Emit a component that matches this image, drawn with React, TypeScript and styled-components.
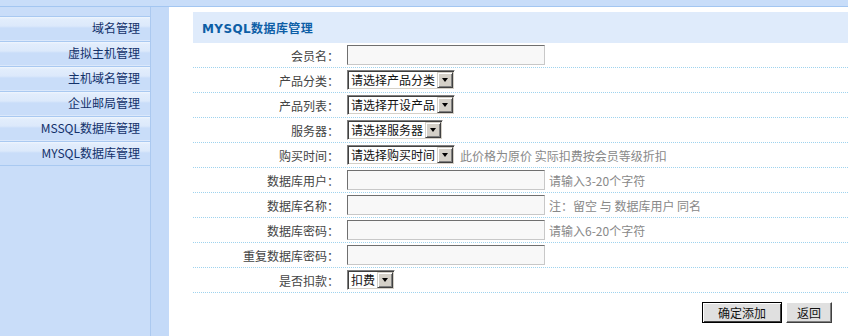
import React from 'react';
import styled, { createGlobalStyle } from 'styled-components';

const GlobalStyle = createGlobalStyle`
  html, body, #root {
    margin: 0;
    padding: 0;
    height: 100%;
  }
  body {
    font-family: "Noto Sans CJK SC", "DejaVu Sans", sans-serif;
    font-size: 12px;
    background: #ffffff;
  }
`;

const Page = styled.div`
  display: flex;
  flex-direction: column;
  height: 100vh;
  overflow: hidden;
`;

const TopBar = styled.div`
  height: 6px;
  background: #c8ddf9;
  border-bottom: 1px solid #a3c6f1;
  flex-shrink: 0;
`;

const Body = styled.div`
  display: flex;
  flex: 1;
`;

const Sidebar = styled.div`
  width: 151px;
  background: #c9ddf9;
  border-right: 1px solid #abc9f0;
  padding-top: 9px;
  box-sizing: border-box;
`;

const MenuItem = styled.div`
  height: 25px;
  box-sizing: border-box;
  border-top: 1px solid #a9c9f1;
  border-bottom: 1px solid #dbe8fb;
  background: linear-gradient(#f0f6fe 0, #e2edfc 2px, #dce9fb 9px, #c9ddf9 11px, #c9ddf9 100%);
  display: flex;
  align-items: center;
  justify-content: flex-end;
  padding: 0 10px 2px 0;
  color: #13316a;
  font-size: 12px;
  &:last-child {
    border-bottom: 1px solid #a9c9f1;
  }
`;

const Gutter = styled.div`
  width: 18px;
  background: #c4daf8;
`;

const Main = styled.div`
  flex: 1;
  padding: 5px 0 0 24px;
`;

const Header = styled.div`
  height: 31px;
  background: #dfebfb;
  display: flex;
  align-items: center;
  padding-left: 9px;
  color: #0d5ea6;
  font-weight: bold;
  font-size: 12px;
  font-family: "DejaVu Sans", "Noto Sans CJK SC", sans-serif;
  letter-spacing: 0.4px;
`;

const Row = styled.div`
  display: flex;
  align-items: center;
  height: 25px;
  box-sizing: border-box;
  border-bottom: 1px dotted #9fd3ee;
`;

const Label = styled.div`
  width: 154px;
  text-align: right;
  color: #444;
  padding-right: 8px;
  box-sizing: border-box;
`;

const Input = styled.div`
  width: 198px;
  height: 20px;
  box-sizing: border-box;
  border: 1px solid;
  border-color: #6f6f6f #c8c8c8 #c8c8c8 #6f6f6f;
  background: #f8f8f8;
`;

const SelectBox = styled.div`
  display: inline-flex;
  align-items: stretch;
  height: 20px;
  box-sizing: border-box;
  border: 1px solid;
  border-color: #808080 #ffffff #ffffff #808080;
  box-shadow: inset 1px 1px 0 #404040, inset -1px -1px 0 #d4d0c8;
  background: #fff;
  padding: 1px;
`;

const SelectText = styled.div`
  padding: 0 2px;
  color: #111;
  line-height: 16px;
  font-size: 12px;
`;

const SelectArrow = styled.div`
  width: 16px;
  background: #d4d0c8;
  box-sizing: border-box;
  border: 1px solid;
  border-color: #d4d0c8 #404040 #404040 #d4d0c8;
  box-shadow: inset 1px 1px 0 #ffffff, inset -1px -1px 0 #808080;
  display: flex;
  align-items: center;
  justify-content: center;
  &::after {
    content: '';
    width: 0;
    height: 0;
    border-left: 3.5px solid transparent;
    border-right: 3.5px solid transparent;
    border-top: 4px solid #000;
  }
`;

const Hint = styled.span<{ $gap?: number }>`
  color: #888;
  margin-left: ${p => p.$gap ?? 4}px;
`;

const Actions = styled.div`
  display: flex;
  justify-content: flex-end;
  gap: 4px;
  padding: 9px 16px 0 0;
`;

const Button = styled.button<{ $primary?: boolean; $w: number }>`
  width: ${p => p.$w}px;
  height: 21px;
  box-sizing: border-box;
  font-family: "Noto Sans CJK SC", sans-serif;
  font-size: 12px;
  color: #111;
  background: #e0e0e0;
  padding: 0;
  border: 1px solid;
  border-color: ${p => (p.$primary ? '#000' : '#fff #404040 #404040 #fff')};
  box-shadow: ${p =>
    p.$primary
      ? 'inset 1px 1px 0 #fff, inset -1px -1px 0 #404040'
      : 'inset -1px -1px 0 #808080'};
`;

function Select({ text }: { text: string }) {
  return (
    <SelectBox>
      <SelectText>{text}</SelectText>
      <SelectArrow />
    </SelectBox>
  );
}

const menu = ['域名管理', '虚拟主机管理', '主机域名管理', '企业邮局管理', 'MSSQL数据库管理', 'MYSQL数据库管理'];

export default function App() {
  return (
    <Page>
      <GlobalStyle />
      <TopBar />
      <Body>
        <Sidebar>
          {menu.map(m => (
            <MenuItem key={m}>{m}</MenuItem>
          ))}
        </Sidebar>
        <Gutter />
        <Main>
          <Header>MYSQL数据库管理</Header>
          <Row>
            <Label>会员名：</Label>
            <Input />
          </Row>
          <Row>
            <Label>产品分类：</Label>
            <Select text="请选择产品分类" />
          </Row>
          <Row>
            <Label>产品列表：</Label>
            <Select text="请选择开设产品" />
          </Row>
          <Row>
            <Label>服务器：</Label>
            <Select text="请选择服务器" />
          </Row>
          <Row>
            <Label>购买时间：</Label>
            <Select text="请选择购买时间" />
            <Hint $gap={5}>此价格为原价 实际扣费按会员等级折扣</Hint>
          </Row>
          <Row>
            <Label>数据库用户：</Label>
            <Input />
            <Hint>请输入3-20个字符</Hint>
          </Row>
          <Row>
            <Label>数据库名称：</Label>
            <Input />
            <Hint>注：留空 与 数据库用户 同名</Hint>
          </Row>
          <Row>
            <Label>数据库密码：</Label>
            <Input />
            <Hint>请输入6-20个字符</Hint>
          </Row>
          <Row>
            <Label>重复数据库密码：</Label>
            <Input />
          </Row>
          <Row>
            <Label>是否扣款：</Label>
            <Select text="扣费" />
          </Row>
          <Actions>
            <Button $primary $w={80}>确定添加</Button>
            <Button $w={46}>返回</Button>
          </Actions>
        </Main>
      </Body>
    </Page>
  );
}
